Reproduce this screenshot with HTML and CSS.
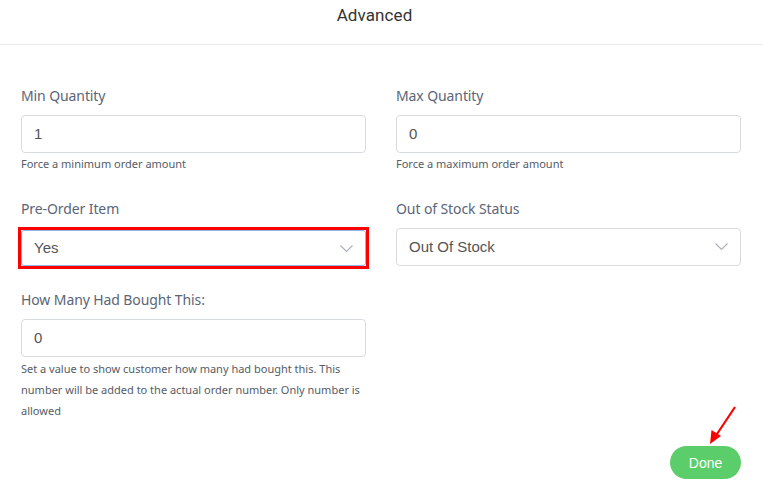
FILE: index.html
```html
<!DOCTYPE html>
<html>
<head>
<meta charset="utf-8">
<link rel="stylesheet" href="styles.css">
</head>
<body>
<div class="modal">
  <div class="header">Advanced</div>
  <div class="body">
    <div class="grid">
      <div class="field">
        <label class="label">Min Quantity</label>
        <div class="input">1</div>
        <div class="help">Force a minimum order amount</div>
      </div>
      <div class="field">
        <label class="label">Max Quantity</label>
        <div class="input">0</div>
        <div class="help">Force a maximum order amount</div>
      </div>
      <div class="field">
        <label class="label">Pre-Order Item</label>
        <div class="highlight">
          <div class="input select focused">Yes
            <svg class="chev" width="13" height="8" viewBox="0 0 13 8"><path d="M0.5 0.5 L6.5 6.5 L12.5 0.5" fill="none" stroke="#a9afbb" stroke-width="1.1"/></svg>
          </div>
        </div>
      </div>
      <div class="field">
        <label class="label">Out of Stock Status</label>
        <div class="input select">Out Of Stock
          <svg class="chev" width="13" height="8" viewBox="0 0 13 8"><path d="M0.5 0.5 L6.5 6.5 L12.5 0.5" fill="none" stroke="#a9afbb" stroke-width="1.1"/></svg>
        </div>
      </div>
      <div class="field">
        <label class="label">How Many Had Bought This:</label>
        <div class="input">0</div>
        <div class="help long">Set a value to show customer how many had bought this. This number will be added to the actual order number. Only number is allowed</div>
      </div>
    </div>
    <div class="footer">
      <button class="done">Done</button>
      <svg class="arrow" width="40" height="50" viewBox="0 0 40 50"><line x1="35" y1="5" x2="15" y2="35" stroke="#ff0000" stroke-width="2.2"/><polygon points="10,42 11.5,28 21,34" fill="#ff0000"/></svg>
    </div>
  </div>
</div>
</body>
</html>
```
FILE: styles.css
```css
* { box-sizing: border-box; }
html, body { margin: 0; padding: 0; background: #fff; }
body { width: 763px; height: 494px; overflow: hidden; font-family: "Liberation Sans", Arial, sans-serif; }
.modal { width: 763px; }
.header {
  height: 45px;
  border-bottom: 1px solid #ebebeb;
  text-align: center;
  font-family: "Roboto", "Liberation Sans", sans-serif;
  font-size: 17px;
  color: #333;
  padding-top: 5px;
  padding-right: 14px;
  letter-spacing: 0.1px;
}
.body { padding: 41px 22px 0 21px; }
.grid {
  display: grid;
  grid-template-columns: 345px 345px;
  column-gap: 30px;
  row-gap: 0;
}
.field { display: flex; flex-direction: column; }
.field:nth-child(1), .field:nth-child(2) { height: 113px; }
.field:nth-child(3), .field:nth-child(4) { height: 91px; }
.label {
  font-family: "Noto Sans", "Open Sans", sans-serif;
  font-size: 14px;
  color: #5b6577;
  line-height: 20px;
  margin-bottom: 9px;
  letter-spacing: -0.1px;
}
.input {
  height: 38px;
  border: 1px solid #d8dbe0;
  border-radius: 4px;
  padding: 0 12px 1px;
  display: flex;
  align-items: center;
  font-size: 15px;
  color: #555;
  position: relative;
}
.select { padding-left: 12px; }
.focused { border-color: #8fb8f0; height: 36px; }
.chev { position: absolute; right: 12px; top: 14px; }
.highlight {
  border: 3px solid #ff0000;
  margin: -1px -3px 0 -3px;
  padding: 0;
  height: 42px;
}
.highlight .input { border-radius: 3px; }
.help {
  font-family: "Noto Sans", "Open Sans", sans-serif;
  font-size: 11px;
  color: #555c66;
  margin-top: 4px;
  line-height: 14px;
}
.help.long { line-height: 21px; margin-top: 1px; }
.footer {
  display: flex;
  justify-content: flex-end;
  position: relative;
  margin-top: 25px;
}
.done {
  width: 71px;
  height: 33px;
  border: none;
  border-radius: 17px;
  background: #5bcd6a;
  color: #fff;
  font-family: "Liberation Sans", Arial, sans-serif;
  font-size: 14px;
  cursor: pointer;
}
.arrow { position: absolute; right: 1px; top: -44px; }
```
